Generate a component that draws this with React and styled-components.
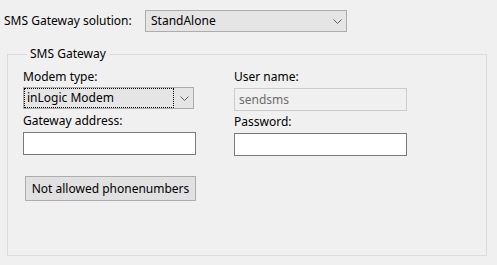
import styled, { createGlobalStyle } from 'styled-components'

const GlobalStyle = createGlobalStyle`
  html, body {
    margin: 0;
    background: #f0f0f0;
  }
  body {
    font-family: "Noto Sans", "Open Sans", sans-serif;
    font-size: 12px;
    color: #000;
  }
`

const Page = styled.div`
  width: 497px;
  height: 265px;
  box-sizing: border-box;
  padding: 10px 0 0 4px;
  overflow: hidden;
`

const TopRow = styled.div`
  display: flex;
  align-items: center;
`

const TopLabel = styled.span`
  width: 141px;
  line-height: 16px;
`

const Combo = styled.div`
  display: flex;
  align-items: center;
  box-sizing: border-box;
  width: ${(p) => p.$width}px;
  height: ${(p) => p.$height}px;
  padding-left: ${(p) => (p.$focused ? 1 : 5)}px;
  background: #e5e5e5;
  border: 1px solid #acacac;
`

const ComboText = styled.span`
  flex: 1;
  line-height: 16px;
  ${(p) =>
    p.$focused &&
    `
    align-self: stretch;
    display: flex;
    align-items: center;
    padding-left: 2px;
    margin: 1px 0;
    outline: 1px dotted #000;
    outline-offset: 0;
  `}
`

const Chevron = styled.svg`
  width: 9px;
  height: 5px;
  margin: 0 4px 0 7px;
  flex: none;
`

const GroupBox = styled.fieldset`
  margin: 14px 0 0 3px;
  padding: 7px 15px 0;
  width: 480px;
  height: 210px;
  box-sizing: border-box;
  border: 1px solid #dcdcdc;
  min-inline-size: 0;
`

const Legend = styled.legend`
  margin-left: 4px;
  padding: 0 3px;
  line-height: 16px;
`

const Columns = styled.div`
  display: grid;
  grid-template-columns: 173px 173px;
  column-gap: 38px;
`

const Column = styled.div`
  display: flex;
  flex-direction: column;
`

const FieldLabel = styled.label`
  display: block;
  line-height: 16px;
  margin-top: ${(p) => p.$top || 0}px;
  margin-bottom: ${(p) => p.$gap}px;
`

const TextBox = styled.div`
  box-sizing: border-box;
  width: 173px;
  height: 23px;
  display: flex;
  align-items: center;
  padding-left: 4px;
  background: ${(p) => (p.$disabled ? '#f0f0f0' : '#fff')};
  border: 1px solid ${(p) => (p.$disabled ? '#cccccc' : '#7a7a7a')};
  color: #6d6d6d;
`

const Button = styled.button`
  display: block;
  margin: 20px 0 0 2px;
  width: 171px;
  height: 25px;
  box-sizing: border-box;
  padding: 0;
  font: inherit;
  color: #000;
  background: #e1e1e1;
  border: 1px solid #adadad;
  border-radius: 0;
`

const ChevronIcon = () => (
  <Chevron viewBox="0 0 9 5">
    <path d="M0.5 0.5 L4.5 4.5 L8.5 0.5" fill="none" stroke="#606060" strokeWidth="1" />
  </Chevron>
)

export default function App() {
  return (
    <>
      <GlobalStyle />
      <Page>
        <TopRow>
          <TopLabel>SMS Gateway solution:</TopLabel>
          <Combo $width={202} $height={22}>
            <ComboText>StandAlone</ComboText>
            <ChevronIcon />
          </Combo>
        </TopRow>
        <GroupBox>
          <Legend>SMS Gateway</Legend>
          <Columns>
            <Column>
              <FieldLabel $gap={2}>Modem type:</FieldLabel>
              <Combo $width={171} $height={22} $focused>
                <ComboText $focused>inLogic Modem</ComboText>
                <ChevronIcon />
              </Combo>
              <FieldLabel $top={4} $gap={3}>Gateway address:</FieldLabel>
              <TextBox />
            </Column>
            <Column>
              <FieldLabel $gap={3}>User name:</FieldLabel>
              <TextBox $disabled>sendsms</TextBox>
              <FieldLabel $top={3} $gap={3}>Password:</FieldLabel>
              <TextBox />
            </Column>
          </Columns>
          <Button>Not allowed phonenumbers</Button>
        </GroupBox>
      </Page>
    </>
  )
}
